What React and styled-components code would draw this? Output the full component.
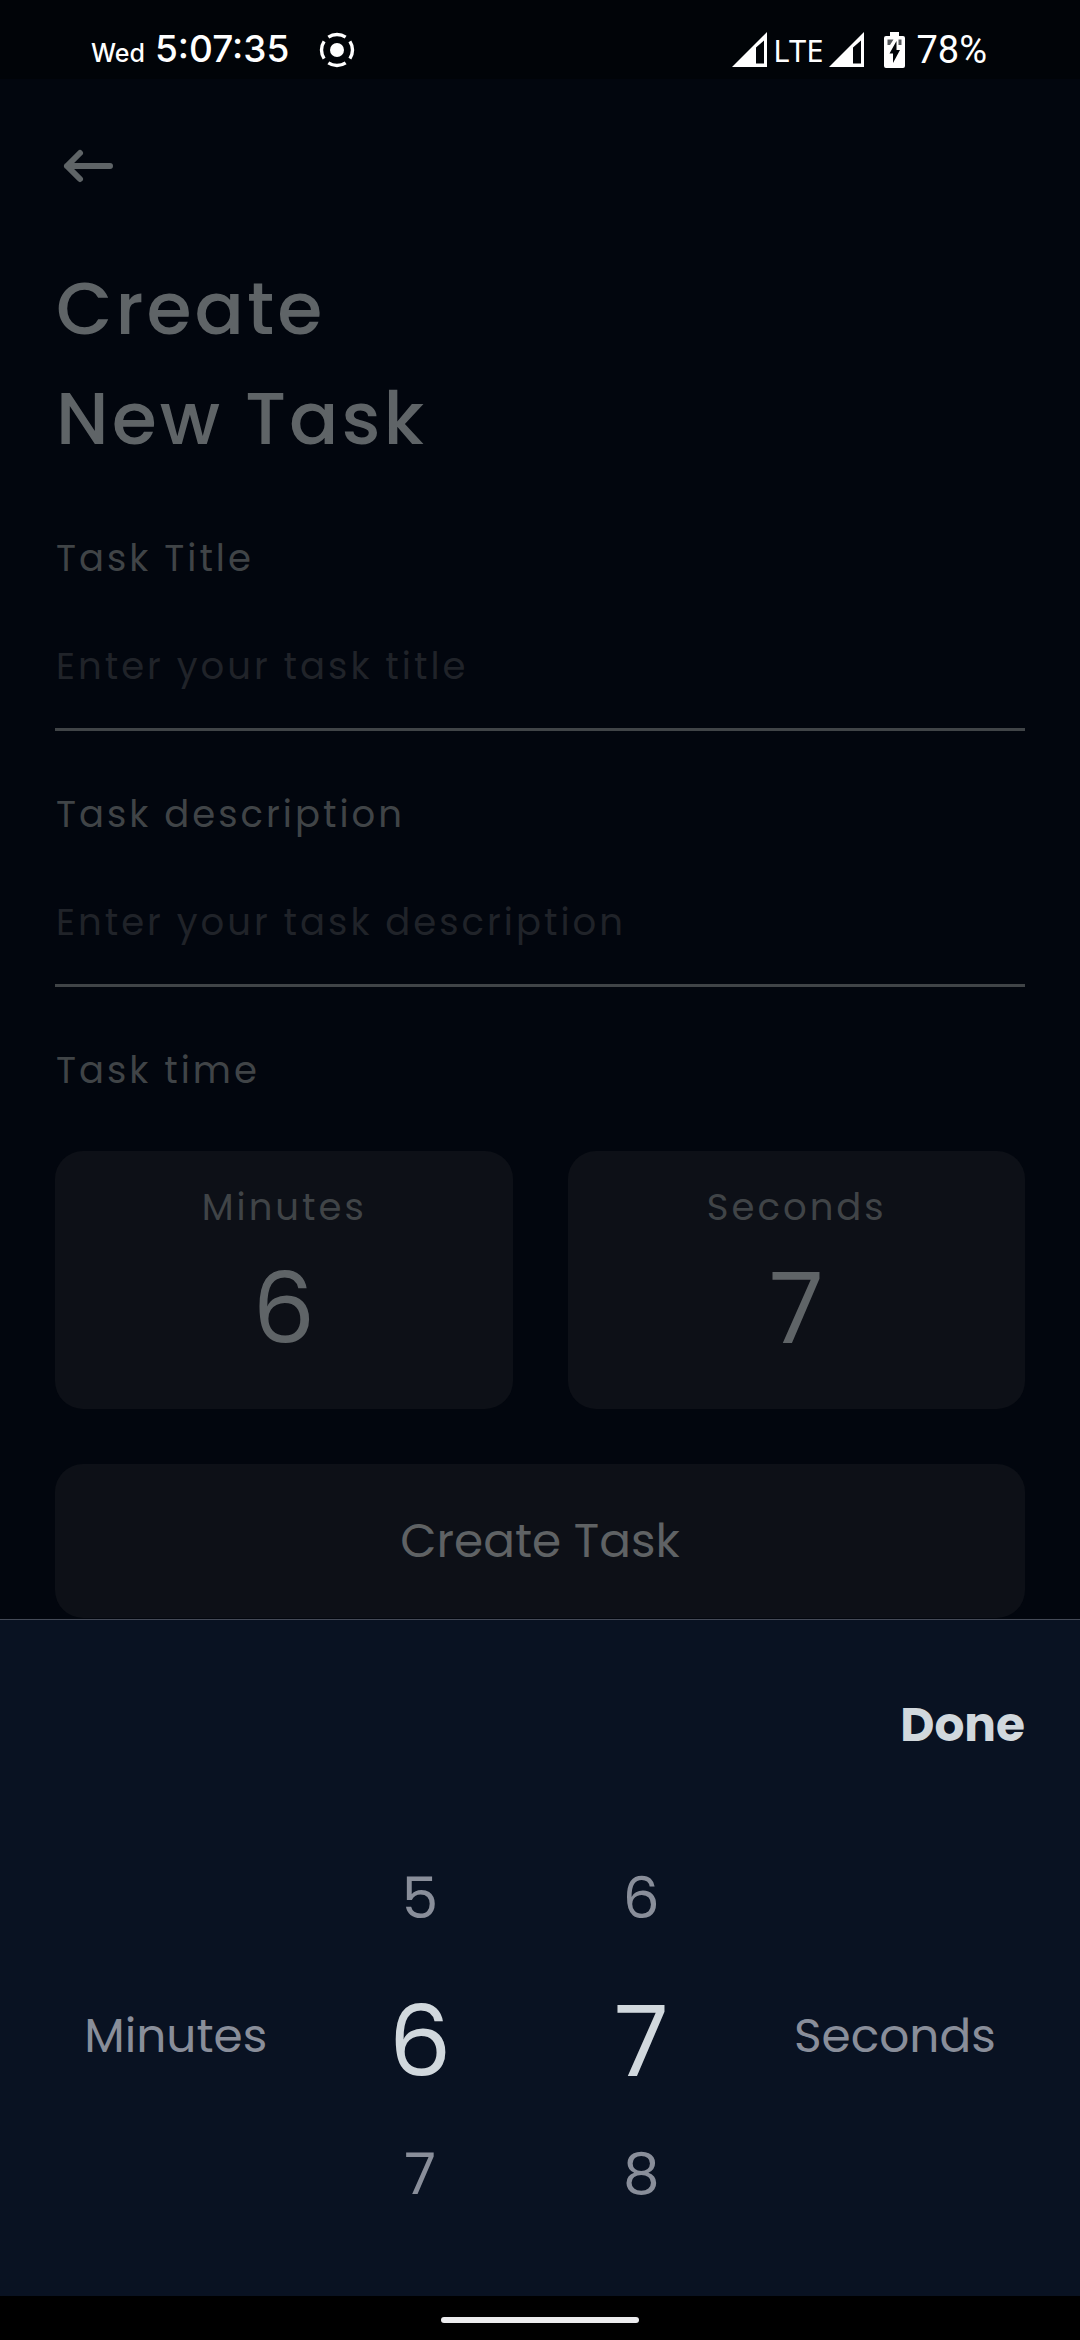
import React, { useState } from "react";
import styled, { createGlobalStyle } from "styled-components";

const GlobalStyle = createGlobalStyle`
  *, *::before, *::after { box-sizing: border-box; }
  body {
    margin: 0;
    background: #02060e;
    font-family: Poppins, Inter, "Open Sans", sans-serif;
  }
  button {
    margin: 0;
    padding: 0;
    border: 0;
    background: none;
    color: inherit;
    font: inherit;
    cursor: pointer;
  }
`;

const Screen = styled.div`
  display: flex;
  flex-direction: column;
  min-height: 100vh;
  background: #02060e;
`;

const StatusBar = styled.header`
  display: flex;
  align-items: center;
  justify-content: space-between;
  height: 79px;
  padding: 20px 93px 0 91px;
  background: #010408;
  color: #ffffff;
  font-family: Inter, sans-serif;
  font-weight: 500;
`;

const StatusGroup = styled.div`
  display: flex;
  align-items: center;
  gap: ${(p) => p.$gap}px;
`;

const Clock = styled.div`
  display: flex;
  align-items: baseline;
  gap: 10px;
  margin-right: 18px;
  padding-top: 2px;
  line-height: 40px;
`;

const Day = styled.span`
  font-size: 25px;
`;

const Time = styled.span`
  font-size: 37px;
`;

const Network = styled.span`
  font-family: "Noto Sans", sans-serif;
  font-size: 31px;
  font-weight: 400;
  line-height: 40px;
`;

const Percent = styled.span`
  margin-left: 5px;
  font-family: Roboto, sans-serif;
  font-size: 38px;
  font-weight: 400;
  line-height: 40px;
`;

const BatteryIcon = styled.svg`
  display: block;
  margin-left: 14px;
`;

const Page = styled.main`
  display: flex;
  flex-direction: column;
  align-items: stretch;
  gap: 55px;
  padding: 54px 55px 1px;
`;

const BackButton = styled.button`
  align-self: flex-start;
  width: 66px;
  height: 66px;

  svg { display: block; }
`;

const Title = styled.h1`
  margin: 0;
  padding: 0 0 1px 1px;
  color: #5f6467;
  font-size: 73px;
  font-weight: 500;
  line-height: 110px;
  letter-spacing: 3px;
`;

const Field = styled.div`
  display: flex;
  flex-direction: column;
`;

const labelText = `
  padding-left: 1px;
  color: #404447;
  font-size: 37px;
  line-height: 56px;
  letter-spacing: 3px;
`;

const Label = styled.label`
  ${labelText}
`;

const TextInput = styled.input`
  width: 100%;
  height: 145px;
  padding: 52px 0 34px 1px;
  border: 0;
  border-bottom: 3px solid #404447;
  border-radius: 0;
  outline: 0;
  background: transparent;
  color: #5f6467;
  font-family: inherit;
  font-size: 37px;
  line-height: 56px;
  letter-spacing: 3px;

  &::placeholder {
    color: #202329;
    opacity: 1;
  }
`;

const TimeSection = styled.section`
  display: flex;
  flex-direction: column;
  gap: 53px;
`;

const SectionLabel = styled.h2`
  margin: 0;
  font-weight: 400;
  ${labelText}
`;

const TimeCards = styled.div`
  display: grid;
  grid-template-columns: 1fr 1fr;
  gap: 55px;
`;

const TimeCard = styled.button`
  display: flex;
  flex-direction: column;
  align-items: center;
  border-radius: 28px;
  && {
    padding: 28px 28px 26px;
    background: #0d1017;
  }
`;

const CardLabel = styled.span`
  ${labelText}
`;

const CardValue = styled.span`
  color: #5f6467;
  font-size: 99px;
  line-height: 148px;
`;

const CreateButton = styled.button`
  border-radius: 28px;
  && {
    padding: 42px;
    background: #0d1017;
    color: #5f6264;
    font-size: 47px;
    line-height: 70px;
  }
`;

const Sheet = styled.section`
  display: flex;
  flex: 1;
  flex-direction: column;
  gap: 70px;
  padding: 70px 0 53px;
  border-top: 1px solid #444a57;
  background: #091222;
`;

const DoneButton = styled.button`
  align-self: flex-end;
  && {
    margin-right: 55px;
    color: #d1d8dd;
    font-size: 47px;
    font-weight: 700;
    line-height: 69px;
  }
`;

const Picker = styled.div`
  display: flex;
  align-items: center;
  justify-content: space-evenly;
`;

const PickerLabel = styled.span`
  color: #898e9a;
  font-size: 47px;
  line-height: 70px;
`;

const Wheel = styled.div`
  display: flex;
  flex-direction: column;
  width: 137px;
`;

const WheelItem = styled.button`
  && {
    height: 138px;
    padding-top: ${(p) => (p.$selected ? 12 : 0)}px;
    color: ${(p) => (p.$selected ? "#d1d8dd" : "#898e9a")};
    font-size: ${(p) => (p.$selected ? 99 : 58)}px;
    line-height: 126px;
  }
`;

const NavBar = styled.footer`
  display: flex;
  align-items: center;
  justify-content: center;
  height: 44px;
  padding-top: 4px;
  background: #000000;
`;

const HomeHandle = styled.span`
  width: 198px;
  height: 6px;
  border-radius: 3px;
  background: #ececee;
`;

function RecordIcon() {
  return (
    <svg width="36" height="36" viewBox="0 0 36 36" aria-hidden="true">
      <circle cx="18" cy="18" r="7" fill="#fff" />
      <circle
        cx="18"
        cy="18"
        r="15.5"
        fill="none"
        stroke="#fff"
        strokeWidth="3.4"
        pathLength="360"
        strokeDasharray="68 22"
        strokeDashoffset="34"
      />
    </svg>
  );
}

function SignalIcon() {
  return (
    <svg width="35" height="35" viewBox="0 0 35 35" aria-hidden="true">
      <path
        fill="#fff"
        fillRule="evenodd"
        d="M0 35 35 0V35ZM24 31.5H32V8.500L24 15.500Z"
      />
    </svg>
  );
}

function Battery() {
  return (
    <BatteryIcon width="21" height="36" viewBox="0 0 21 36" aria-hidden="true">
      <path
        fill="#fff"
        d="M6 0H15V4H19Q21 4 21 6V34Q21 36 19 36H2Q0 36 0 34V6Q0 4 2 4H6Z"
      />
      <path fill="#54575a" d="M3.500 7.500H9.500L6 13H3.500ZM14.500 7.500H17.500V13H14.500Z" />
      <path fill="#010408" d="M12.500 9V18H16L9 31V21.500H5.500Z" />
    </BatteryIcon>
  );
}

function NumberWheel({ name, value, onChange }) {
  return (
    <Wheel role="group" aria-label={name}>
      {[value - 1, value, value + 1].map((n) => (
        <WheelItem
          key={n}
          type="button"
          $selected={n === value}
          onClick={() => onChange((n + 60) % 60)}
        >
          {(n + 60) % 60}
        </WheelItem>
      ))}
    </Wheel>
  );
}

export default function App() {
  const [minutes, setMinutes] = useState(6);
  const [seconds, setSeconds] = useState(7);

  return (
    <Screen>
      <GlobalStyle />
      <StatusBar>
        <StatusGroup $gap={12}>
          <Clock>
            <Day>Wed</Day>
            <Time>5:07:35</Time>
          </Clock>
          <RecordIcon />
        </StatusGroup>
        <StatusGroup $gap={6}>
          <SignalIcon />
          <Network>LTE</Network>
          <SignalIcon />
          <Battery />
          <Percent>78%</Percent>
        </StatusGroup>
      </StatusBar>

      <Page>
        <BackButton type="button" aria-label="Back">
          <svg width="66" height="66" viewBox="0 0 66 66" aria-hidden="true">
            <path
              d="M25 20 12 33 25 46M12 33H55"
              fill="none"
              stroke="#5f6467"
              strokeWidth="6"
              strokeLinecap="round"
              strokeLinejoin="round"
            />
          </svg>
        </BackButton>

        <Title>
          Create
          <br />
          New Task
        </Title>

        <Field>
          <Label htmlFor="task-title">Task Title</Label>
          <TextInput id="task-title" type="text" placeholder="Enter your task title" />
        </Field>

        <Field>
          <Label htmlFor="task-description">Task description</Label>
          <TextInput
            id="task-description"
            type="text"
            placeholder="Enter your task description"
          />
        </Field>

        <TimeSection>
          <SectionLabel>Task time</SectionLabel>
          <TimeCards>
            <TimeCard type="button">
              <CardLabel>Minutes</CardLabel>
              <CardValue>{minutes}</CardValue>
            </TimeCard>
            <TimeCard type="button">
              <CardLabel>Seconds</CardLabel>
              <CardValue>{seconds}</CardValue>
            </TimeCard>
          </TimeCards>
        </TimeSection>

        <CreateButton type="button">Create Task</CreateButton>
      </Page>

      <Sheet aria-label="Task time">
        <DoneButton type="button">Done</DoneButton>
        <Picker>
          <PickerLabel>Minutes</PickerLabel>
          <NumberWheel name="Minutes" value={minutes} onChange={setMinutes} />
          <NumberWheel name="Seconds" value={seconds} onChange={setSeconds} />
          <PickerLabel>Seconds</PickerLabel>
        </Picker>
      </Sheet>

      <NavBar>
        <HomeHandle />
      </NavBar>
    </Screen>
  );
}
